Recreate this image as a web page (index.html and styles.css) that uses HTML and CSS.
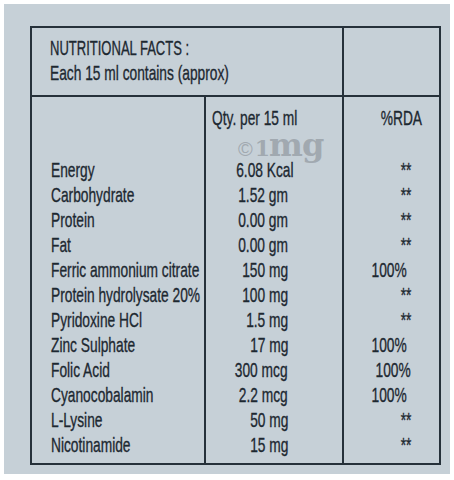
FILE: index.html
```html
<!DOCTYPE html>
<html lang="en">
<head>
  <meta charset="UTF-8" />
  <meta name="viewport" content="width=device-width, initial-scale=1" />
  <title>Nutritional Facts</title>
  <link rel="stylesheet" href="styles.css">
</head>
<body>

  <div class="card">

    <table class="facts">
      <colgroup>
        <col class="col-name">
        <col class="col-qty">
        <col class="col-rda">
      </colgroup>

      <tr class="head">
        <td colspan="2" class="title">
          <span class="c caps">NUTRITIONAL FACTS :</span><br>
          <span class="c">Each 15 ml contains (approx)</span>
        </td>
        <td class="qty"></td>
      </tr>

      <tr class="sub">
        <td class="name"></td>
        <td class="qty qty-head"><span class="c">Qty. per 15 ml</span></td>
        <td class="rda rda-head"><span class="c r">%RDA</span></td>
      </tr>

      <tr class="first">
        <td class="name"><span class="c">Energy</span></td>
        <td class="qty"><span class="c r">6.08 Kcal</span></td>
        <td class="rda"><span class="c r">**</span></td>
      </tr>
      <tr>
        <td class="name"><span class="c">Carbohydrate</span></td>
        <td class="qty"><span class="c r">1.52 gm</span></td>
        <td class="rda"><span class="c r">**</span></td>
      </tr>
      <tr>
        <td class="name"><span class="c">Protein</span></td>
        <td class="qty"><span class="c r">0.00 gm</span></td>
        <td class="rda"><span class="c r">**</span></td>
      </tr>
      <tr>
        <td class="name"><span class="c">Fat</span></td>
        <td class="qty"><span class="c r">0.00 gm</span></td>
        <td class="rda"><span class="c r">**</span></td>
      </tr>
      <tr>
        <td class="name"><span class="c">Ferric ammonium citrate</span></td>
        <td class="qty"><span class="c r">150 mg</span></td>
        <td class="rda pct"><span class="c r">100%</span></td>
      </tr>
      <tr>
        <td class="name"><span class="c">Protein hydrolysate 20%</span></td>
        <td class="qty"><span class="c r">100 mg</span></td>
        <td class="rda"><span class="c r">**</span></td>
      </tr>
      <tr>
        <td class="name"><span class="c">Pyridoxine HCl</span></td>
        <td class="qty"><span class="c r">1.5 mg</span></td>
        <td class="rda"><span class="c r">**</span></td>
      </tr>
      <tr>
        <td class="name"><span class="c">Zinc Sulphate</span></td>
        <td class="qty"><span class="c r">17 mg</span></td>
        <td class="rda pct"><span class="c r">100%</span></td>
      </tr>
      <tr>
        <td class="name"><span class="c">Folic Acid</span></td>
        <td class="qty"><span class="c r">300 mcg</span></td>
        <td class="rda"><span class="c r">100%</span></td>
      </tr>
      <tr>
        <td class="name"><span class="c">Cyanocobalamin</span></td>
        <td class="qty"><span class="c r">2.2 mcg</span></td>
        <td class="rda pct"><span class="c r">100%</span></td>
      </tr>
      <tr>
        <td class="name"><span class="c">L-Lysine</span></td>
        <td class="qty"><span class="c r">50 mg</span></td>
        <td class="rda"><span class="c r">**</span></td>
      </tr>
      <tr class="last">
        <td class="name"><span class="c">Nicotinamide</span></td>
        <td class="qty"><span class="c r">15 mg</span></td>
        <td class="rda"><span class="c r">**</span></td>
      </tr>
    </table>

    <!-- watermark over the table -->
    <div class="mark"><span class="copy">©</span><span class="one">1</span>mg</div>

  </div>

</body>
</html>
```

FILE: styles.css
```css
body {
  margin: 0;
  background: #ffffff;
}

.card {
  position: relative;
  margin: 4px 0 0 4px;
  width: 420px;
  height: 448px;
  padding: 22px 0 0 26px;
  background: #c6d0d7;
  color: #1d2831;
  font-family: "Liberation Sans", Arial, sans-serif;
  font-size: 21px;
  line-height: 25px;
}

.facts {
  table-layout: fixed;
  width: 411px;
  border-collapse: separate;
  border-spacing: 0;
  border: 2px solid #26313a;
}

.col-name {
  width: 172px;
}

.col-qty {
  width: 138px;
}

.col-rda {
  width: 97px;
}

.facts td {
  padding: 0;
  white-space: nowrap;
  vertical-align: top;
}

.facts .qty,
.facts .rda {
  border-left: 2px solid #26313a;
}

.head td {
  border-bottom: 2px solid #26313a;
}

.title {
  padding: 7px 0 10px 18px !important;
}

/* condensed look: scale the glyphs sideways */
.c {
  display: inline-block;
  transform: scaleX(0.655);
  transform-origin: left center;
  -webkit-text-stroke: 0.35px #1d2831;
}

.c.r {
  transform-origin: right center;
}

.c.caps {
  transform: scaleX(0.62);
}

.name {
  padding-left: 19px !important;
}

.facts td.qty {
  text-align: right;
  padding-right: 54px;
}

.facts td.rda {
  text-align: right;
  padding-right: 28px;
}

.facts td.pct {
  padding-right: 32px;
}

.sub td {
  padding-top: 8px;
}

.facts td.qty-head {
  text-align: left;
  padding-left: 6px;
  padding-right: 0;
}

.facts td.rda-head {
  padding-right: 17px;
}

.first td {
  padding-top: 27px;
}

.last td {
  padding-bottom: 6px;
}

.mark {
  position: absolute;
  left: 234px;
  top: 130px;
  color: #a1a9b0;
  font-family: "DejaVu Serif", serif;
  font-weight: bold;
  font-size: 32px;
  line-height: 22px;
  letter-spacing: -1px;
}

.copy {
  font-family: "Liberation Sans", sans-serif;
  font-weight: normal;
  font-size: 20px;
  margin-right: 3px;
}

.one {
  font-size: 22px;
}
```
